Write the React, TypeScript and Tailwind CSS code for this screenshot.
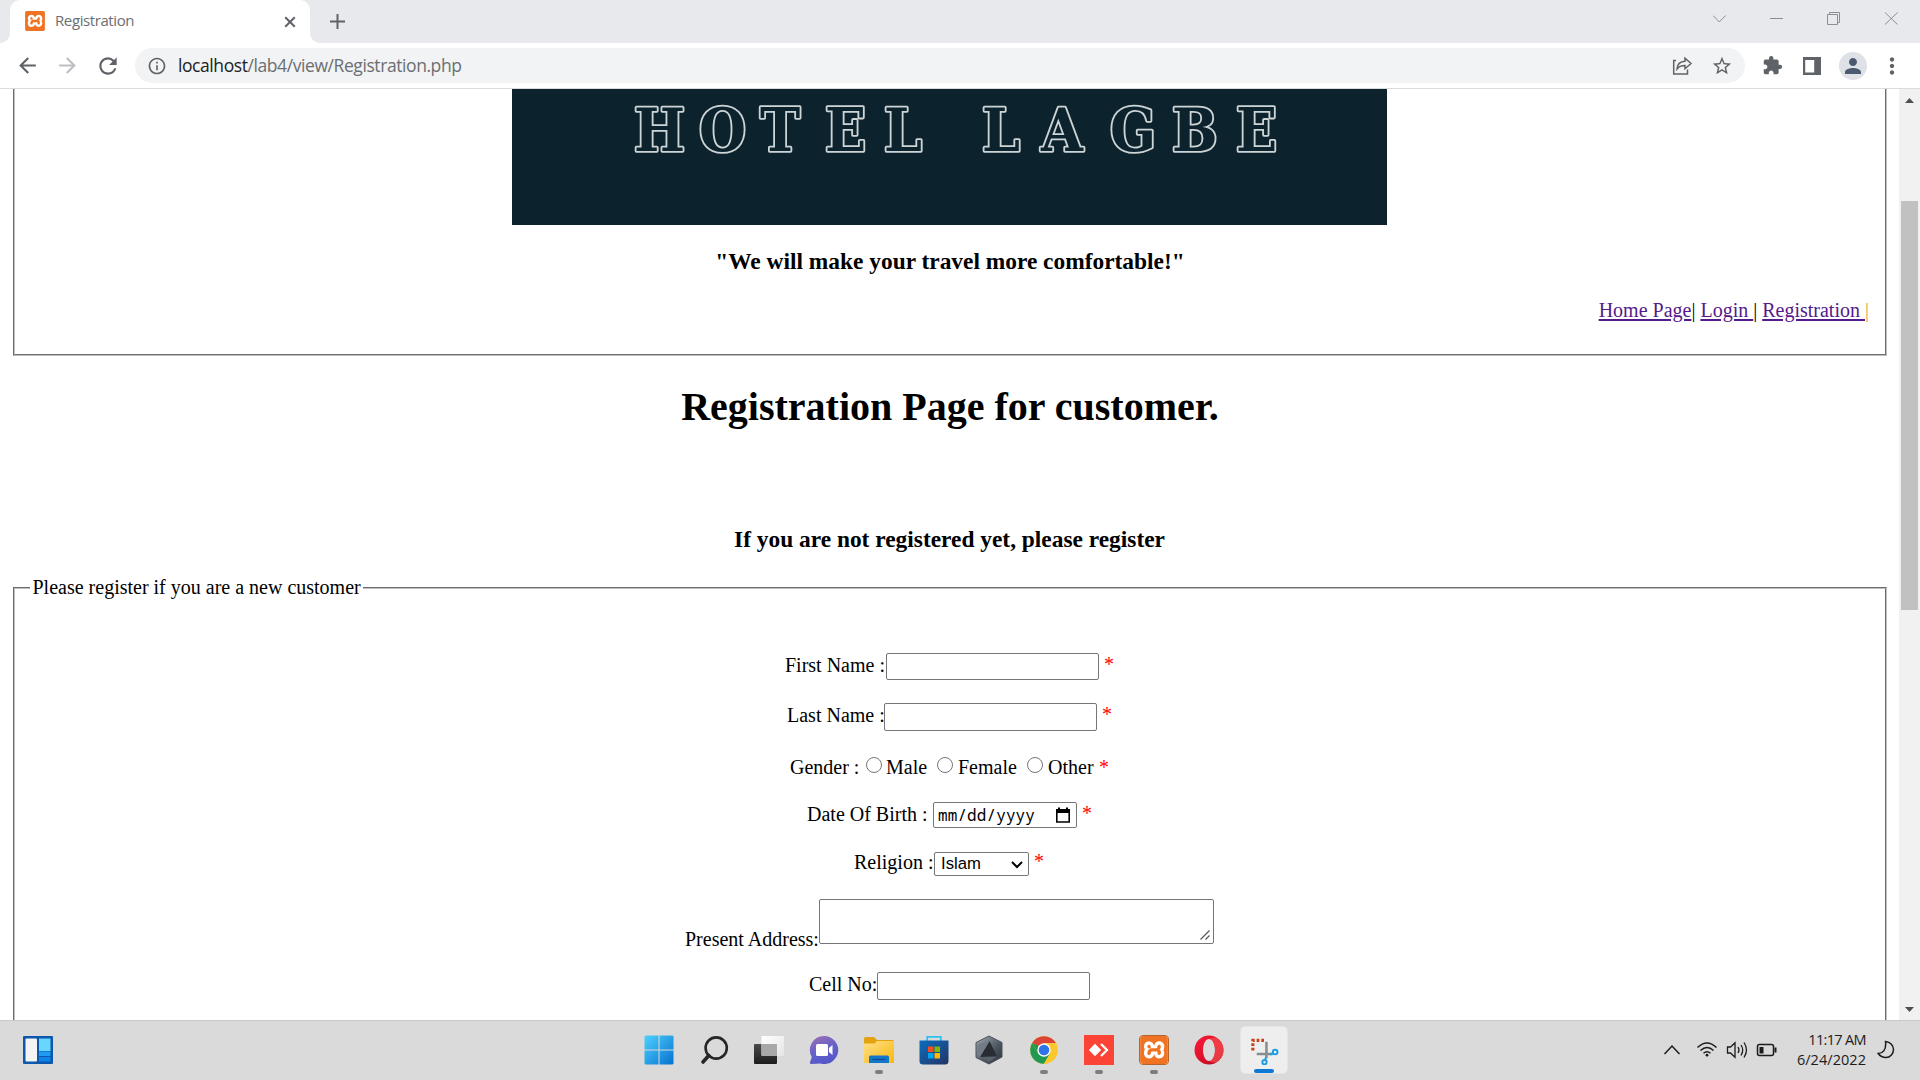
import type { ReactNode } from "react";
import {
  MdArrowBack,
  MdArrowForward,
  MdRefresh,
  MdInfoOutline,
  MdStarBorder,
  MdExtension,
  MdPerson,
  MdMoreVert,
} from "react-icons/md";
import { SiXampp } from "react-icons/si";

const UI = "font-['Open_Sans','Noto_Sans',sans-serif]";

function TabStrip() {
  return (
    <div className="flex h-[43px] shrink-0 bg-[#e8e9ed]">
      <div className="flex w-[10px] items-end bg-white">
        <div className="h-full w-full rounded-br-[10px] bg-[#e8e9ed]" />
      </div>
      <div className="flex w-[300px] bg-white">
        <div className="flex h-full w-full bg-[#e8e9ed]">
          <div className="flex w-full items-center rounded-t-[10px] bg-white pl-[15px]">
            <div className="relative -top-px h-5 w-5 rounded-[2px] bg-white text-[#f07323]">
              <SiXampp size={20} />
            </div>
            <span className={`ml-[10px] mt-[-4px] w-[200px] whitespace-nowrap text-[15px] leading-5 tracking-[-0.4px] text-[#6b6e72] ${UI}`}>
              Registration
            </span>
            <svg className="ml-[29px]" width="12" height="12" viewBox="0 0 12 12" stroke="#5f6368" strokeWidth="2" fill="none">
              <path d="M1.200 1.200l9.600 9.600M10.800 1.200L1.200 10.800" />
            </svg>
          </div>
        </div>
      </div>
      <div className="flex flex-1 bg-white">
        <div className="flex flex-1 justify-between rounded-bl-[10px] bg-[#e8e9ed]">
          <svg className="ml-5 mt-[14px]" width="15" height="15" viewBox="0 0 15 15" stroke="#5f6368" strokeWidth="2" fill="none">
            <path d="M7.500 0v15M0 7.500h15" />
          </svg>
          <svg width="207" height="43" viewBox="1713 0 207 43" stroke="#8d8e91" strokeWidth="1" fill="none">
            <path d="M1713 15.500l6.300 6.500l6.300-6.500M1770 18.500h13M1827.500 14.500h10v10h-10zM1829.500 14.500v-2h10v10h-2M1885 12.500l12.500 12M1897.500 12.500l-12.500 12" />
          </svg>
        </div>
      </div>
    </div>
  );
}

function Toolbar() {
  return (
    <div className="flex h-[46px] shrink-0 items-start border-b border-[#dadbdd] bg-white pt-[5px]">
      <div className="flex h-[35px] w-[135px] items-center pl-[15px] text-[#5f6368]">
        <MdArrowBack size={25} />
        <MdArrowForward size={25} className="ml-[15px] text-[#bcbec1]" />
        <MdRefresh size={26} className="ml-[15px]" />
      </div>
      <div className="flex h-[35px] w-[1610px] items-center rounded-full bg-[#f1f3f4] pl-[12px]">
        <MdInfoOutline size={20} className="text-[#5f6368]" />
        <span className={`ml-[11px] mt-[-1px] w-[1494px] whitespace-nowrap text-[17.500px] leading-6 tracking-[-0.420px] text-[#6b6e72] ${UI}`}>
          <span className="text-[#202124]">localhost</span>/lab4/view/Registration.php
        </span>
        <svg className="mt-[1px]" width="21" height="20" viewBox="0 0 21 20" stroke="#5f6368" strokeWidth="1.500" fill="none">
          <path d="M4 4.500H1.700v13.500H15.500v-4.500" />
          <path d="M5 13c.3-5 3.500-7.500 8-7.700V2.200L19 7.500l-6 5.200V9.600C9 9.600 7 10.500 5 13z" />
        </svg>
        <MdStarBorder size={22} className="ml-[18px] text-[#5f6368]" />
      </div>
      <div className="flex h-[35px] flex-1 items-center text-[#5f6368]">
        <MdExtension size={21} className="ml-[17px]" />
        <svg className="ml-[20px]" width="18" height="18" viewBox="0 0 18 18">
          <path d="M0 0h18v18H0z" fill="#5f6368" />
          <path d="M2.200 3h9v12.500h-9z" fill="#fff" />
        </svg>
        <div className="ml-[18px] flex h-7 w-7 items-center justify-center rounded-full bg-[#dee1e6] text-[#4c5a70]">
          <MdPerson size={24} />
        </div>
        <MdMoreVert size={26} className="ml-[12px] mt-px" />
      </div>
    </div>
  );
}

function Banner() {
  return (
    <svg className="ml-[497px] block bg-[#0c222d]" width="875" height="136" viewBox="512 89 875 136">
      <text
        x="634 699 760 825 884 940 982 1041 1110 1172 1236"
        y="150.500"
        className="font-['DejaVu_Serif_Condensed','DejaVu_Serif',serif] font-bold [paint-order:stroke]"
        fontSize="60"
        fill="#0c222d"
        stroke="#ccd4d5"
        strokeWidth="3.600"
        strokeLinejoin="round"
      >
        HOTEL LAGBE
      </text>
    </svg>
  );
}

function Star({ className }: { className: string }) {
  return <span className={`text-[red] ${className}`}>*</span>;
}

function TextBox({ className }: { className: string }) {
  return <div className={`box-border w-[213px] rounded-[2px] border border-[#767676] bg-white ${className}`} />;
}

function Radio() {
  return <div className="mt-px h-4 w-4 rounded-full border border-[#767676] bg-white" />;
}

function RegistrationForm() {
  return (
    <fieldset className="ml-[13px] mr-[12px] mt-[23px] h-[460px] [border:2px_groove_#c0c0c0] text-black">
      <legend className="ml-[15px] h-[23px] px-[2.500px] leading-[23px]">Please register if you are a new customer</legend>
      <div className="flex flex-col whitespace-nowrap leading-[23px]">
        <div className="mt-[54px] flex h-[50px] items-start pl-[770px]">
          <span className="mt-px w-[101px]">First Name :</span>
          <TextBox className="h-[27px]" />
          <Star className="ml-[5px]" />
        </div>
        <div className="flex h-[53px] items-start pl-[772px]">
          <span className="mt-px w-[97px]">Last Name :</span>
          <TextBox className="h-[28px]" />
          <Star className="ml-[5px]" />
        </div>
        <div className="flex h-[46px] items-start pl-[775px]">
          <span className="w-[76px]">Gender :</span>
          <Radio />
          <span className="ml-[4px] w-[51px]">Male</span>
          <Radio />
          <span className="ml-[5px] w-[69px]">Female</span>
          <Radio />
          <span className="ml-[5px] w-[51px]">Other</span>
          <Star className="" />
        </div>
        <div className="flex h-[50px] items-start pl-[792px]">
          <span className="mt-px w-[126px]">Date Of Birth :</span>
          <div className="flex h-[26px] w-[144px] items-center justify-between rounded-[2px] border border-[#767676] pl-[4px] pr-[6px]">
            <span className="font-['Noto_Sans_Mono','DejaVu_Sans_Mono',monospace] text-[16px] leading-5 tracking-[0.1px]">mm/dd/yyyy</span>
            <svg width="14" height="16" viewBox="0 0 14 16">
              <path d="M.8 3h12.400v12H.8z" fill="none" stroke="#000" strokeWidth="1.600" />
              <path d="M0 2h14v4H0zM2 .5h2v2H2zM10 .5h2v2h-2z" />
            </svg>
          </div>
          <Star className="ml-[5px]" />
        </div>
        <div className="flex h-[47px] items-start pl-[839px]">
          <span className="-mt-px w-[80px]">Religion :</span>
          <div className="flex h-[24px] w-[95px] items-center justify-between rounded-[2px] border border-[#767676] pl-[6px] pr-[5px]">
            <span className="font-['Liberation_Sans',sans-serif] text-[16.670px] leading-5">Islam</span>
            <svg className="mt-px" width="12" height="8" viewBox="0 0 12 8" fill="none" stroke="#000" strokeWidth="2">
              <path d="M1 1l5 5 5-5" />
            </svg>
          </div>
          <Star className="-mt-[2px] ml-[5px]" />
        </div>
        <div className="flex h-[73px] items-start pl-[670px]">
          <span className="mt-[29px] w-[134px]">Present Address:</span>
          <div className="flex h-[45px] w-[395px] items-end justify-end rounded-[2px] border border-[#767676] p-[3px]">
            <svg width="10" height="10" viewBox="0 0 10 10" stroke="#555" strokeWidth="1.200">
              <path d="M.5 9.500l9-9M5.500 9.500l4-4" />
            </svg>
          </div>
        </div>
        <div className="flex items-start pl-[794px]">
          <span className="mt-px w-[68px]">Cell No:</span>
          <TextBox className="h-[28px]" />
        </div>
      </div>
    </fieldset>
  );
}

function PageView() {
  return (
    <div className="flex h-[931px] shrink-0 overflow-hidden bg-white">
      <div className="h-full w-[1899px] overflow-hidden font-['Liberation_Serif',serif] text-[20px] leading-[23px] text-black">
        <div className="ml-[13px] mr-[12px] h-[267px] border-2 border-t-0 border-[#c0c0c0] [border-style:groove]">
          <Banner />
          <h3 className="mt-[23px] text-center text-[23.400px] font-bold leading-[27px]">"We will make your travel more comfortable!"</h3>
          <div className="mr-[16px] mt-[24px] flex justify-end whitespace-pre text-black">
            <span className="text-[#551a8b] underline decoration-2 underline-offset-2">Home Page</span>
            <span>| </span>
            <span className="text-[#551a8b] underline decoration-2 underline-offset-2">Login </span>
            <span>| </span>
            <span className="text-[#551a8b] underline decoration-2 underline-offset-2">Registration </span>
            <span className="text-[#e0a050]">|</span>
          </div>
        </div>
        <h1 className="mr-[-1px] mt-[28px] text-center text-[40px] font-bold leading-[46px]">Registration Page for customer.</h1>
        <h3 className="mt-[96px] text-center text-[23.400px] font-bold leading-[27px]">If you are not registered yet, please register</h3>
        <RegistrationForm />
      </div>
      <div className="flex w-[21px] flex-col items-center justify-between bg-[#f1f1f1] pb-[8px] pt-[9px]">
        <svg width="9" height="5" viewBox="0 0 9 5" fill="#505050">
          <path d="M0 5L4.500 0 9 5z" />
        </svg>
        <div className="mb-[397px] mt-[98px] w-[17px] flex-1 bg-[#c1c1c1]" />
        <svg width="9" height="5" viewBox="0 0 9 5" fill="#505050">
          <path d="M0 0l4.500 5L9 0z" />
        </svg>
      </div>
    </div>
  );
}

function Slot({ children, running }: { children: ReactNode; running?: boolean }) {
  return (
    <div className="flex h-[60px] w-[55px] flex-col items-center pt-[15px]">
      {children}
      {running && <div className="mt-[5px] h-[4px] w-[8px] rounded-full bg-[#7d7d7d]" />}
    </div>
  );
}

function TaskIcons() {
  return (
    <div className="flex">
      <Slot>
        <svg width="30" height="30" viewBox="0 0 30 30">
          <defs>
            <linearGradient id="win" x1="0" y1="0" x2="1" y2="1" gradientUnits="objectBoundingBox">
              <stop offset="0" stopColor="#4fd0fd" />
              <stop offset="1" stopColor="#0571d0" />
            </linearGradient>
          </defs>
          <path d="M1.500.5H14.500V14.500H.5V1.500zM15.500.5H28.500l1 1V14.500h-14zM.5 15.500h14v14h-13l-1-1zM15.500 15.500h14v13l-1 1h-13z" fill="url(#win)" />
        </svg>
      </Slot>
      <Slot>
        <svg width="30" height="30" viewBox="0 0 30 30" fill="none" stroke="#262626">
          <circle cx="17.200" cy="13" r="10.600" strokeWidth="2.600" />
          <path d="M9.800 20.500L4 27" strokeWidth="3.600" strokeLinecap="round" />
        </svg>
      </Slot>
      <Slot>
        <svg width="30" height="30" viewBox="0 0 30 30">
          <defs>
            <linearGradient id="tv1" x1="0" y1="0" x2="0" y2="1">
              <stop offset="0" stopColor="#4a4a4a" />
              <stop offset="1" stopColor="#1c1c1c" />
            </linearGradient>
            <linearGradient id="tv2" x1="0" y1="0" x2="1" y2="1">
              <stop offset="0" stopColor="#fff" />
              <stop offset="1" stopColor="#e4e4e4" />
            </linearGradient>
          </defs>
          <rect x="0" y="9" width="23" height="20" rx="1" fill="url(#tv1)" />
          <rect x="7.500" y="1" width="22.500" height="20" rx="1" fill="url(#tv2)" />
          <path d="M7.500 9H23v12H8.500l-1-1z" fill="#a8a8a8" />
        </svg>
      </Slot>
      <Slot>
        <svg width="30" height="30" viewBox="0 0 30 30">
          <defs>
            <linearGradient id="chat" x1="0.100" y1="0" x2="0.500" y2="1">
              <stop offset="0" stopColor="#9a6fb0" />
              <stop offset="0.500" stopColor="#6a62c8" />
              <stop offset="1" stopColor="#5257c9" />
            </linearGradient>
          </defs>
          <path d="M15 1a14 14 0 1 1-3.500 27.500L2 29c-1 0-1.500-1-1-1.800l1.800-5.200A14 14 0 0 1 15 1z" fill="url(#chat)" />
          <rect x="7" y="9" width="12" height="12" rx="1.500" fill="#fff" />
          <path d="M20 13l3.500-3v10L20 17z" fill="#fff" />
        </svg>
      </Slot>
      <Slot running>
        <svg width="30" height="30" viewBox="0 0 30 30">
          <defs>
            <linearGradient id="fold" x1="0" y1="0" x2="1" y2="1">
              <stop offset="0" stopColor="#ffe08a" />
              <stop offset="1" stopColor="#f8b90c" />
            </linearGradient>
          </defs>
          <path d="M0 3.500Q0 2 1.500 2H10l3 3h15.500Q30 5 30 6.500V10H0z" fill="#e2a30f" />
          <path d="M0 8.500h10.500L13 6h17v22H0z" fill="url(#fold)" />
          <path d="M5 28v-6q0-1.500 1.500-1.500h17Q25 20.500 25 22v6z" fill="#1377c9" />
          <path d="M8.500 24.500h13" stroke="#0b4b93" strokeWidth="1.200" />
        </svg>
      </Slot>
      <Slot>
        <svg width="30" height="30" viewBox="0 0 30 30">
          <defs>
            <linearGradient id="store" x1="0" y1="0" x2="1" y2="1">
              <stop offset="0" stopColor="#0d6dc0" />
              <stop offset="1" stopColor="#223463" />
            </linearGradient>
          </defs>
          <path d="M8.200 7V1.800h13.600V7" fill="none" stroke="#2fc1f0" strokeWidth="1.800" />
          <path d="M.5 5.500h29V26q0 3.500-3.500 3.500H4Q.5 29.500.5 26z" fill="url(#store)" />
          <path d="M9 11.500h5.500V17H9z" fill="#f25022" />
          <path d="M15.500 11.500H21V17h-5.500z" fill="#7fba00" />
          <path d="M9 18h5.500v5.500H9z" fill="#00a4ef" />
          <path d="M15.500 18H21v5.500h-5.500z" fill="#ffb900" />
        </svg>
      </Slot>
      <Slot>
        <svg width="30" height="30" viewBox="0 0 30 30">
          <defs>
            <linearGradient id="hex" x1="0" y1="0" x2="1" y2="1">
              <stop offset="0" stopColor="#a4acb5" />
              <stop offset="0.600" stopColor="#4b545e" />
              <stop offset="1" stopColor="#2a3138" />
            </linearGradient>
          </defs>
          <path d="M15 1L28 7.500v14.500L15 29 2 22.500v-15z" fill="url(#hex)" stroke="#4a5159" />
          <path d="M15.500 6L23 21.500 6 22z" fill="#272d33" />
          <path d="M15.500 6L6 22l-3-2 1-11z" fill="#737c86" />
          <path d="M23 21.500L15 27 6 22z" fill="#59626c" />
        </svg>
      </Slot>
      <Slot running>
        <svg width="30" height="30" viewBox="0 0 30 30">
          <circle cx="15" cy="15" r="13.800" fill="#fcc62e" />
          <path d="M15 15L3.050 8.100A13.800 13.800 0 0 1 26.950 8.100H15z" fill="#dd4437" />
          <path d="M3.050 8.100A13.800 13.800 0 0 0 15 28.800L21 18.500 15 15 9.500 19z" fill="#1f9a50" />
          <path d="M3.050 8.100L9.300 18.500 12 12z" fill="#1f9a50" />
          <path d="M15 8.100H26.950A13.800 13.800 0 0 1 15 28.800L21 18.500z" fill="#fcc62e" />
          <circle cx="15" cy="15" r="6.700" fill="#fff" />
          <circle cx="15" cy="15" r="5.300" fill="#2f74e6" />
        </svg>
      </Slot>
      <Slot running>
        <svg width="30" height="30" viewBox="0 0 30 30">
          <path d="M0 0h30v30H0z" fill="#fb4336" />
          <path d="M11 8.800L17.200 15 11 21.200 4.800 15z" fill="#fff" />
          <path d="M17 9l6 6-6 6" fill="none" stroke="#fff" strokeWidth="2.200" />
        </svg>
      </Slot>
      <Slot running>
        <div className="h-[30px] w-[30px] rounded-[4px] border border-[#b5652b] bg-white text-[#f07323]">
          <SiXampp size={28} />
        </div>
      </Slot>
      <Slot>
        <svg width="30" height="30" viewBox="0 0 30 30">
          <defs>
            <linearGradient id="op" x1="0" y1="0" x2="1" y2="1">
              <stop offset="0" stopColor="#ff1b3a" />
              <stop offset="0.600" stopColor="#d80f28" />
              <stop offset="1" stopColor="#a8091c" />
            </linearGradient>
          </defs>
          <path d="M15 .5a14.500 14.500 0 1 1 0 29 14.500 14.500 0 0 1 0-29zM15 4c-3.300 0-6 4.900-6 11s2.700 11 6 11 6-4.900 6-11-2.700-11-6-11z" fill="url(#op)" fillRule="evenodd" />
          <path d="M15 4q3-2 7-1.500Q29.500 7 29.500 15T22 27.500Q18 28 15 26c3.300 0 6-4.900 6-11S18.300 4 15 4z" fill="#f5494d" opacity=".75" />
        </svg>
      </Slot>
      <div className="ml-[4px] mt-[6px] flex h-[48px] w-[48px] flex-col items-center rounded-[5px] border border-[#e4e4e4] bg-[#eeeeee] pt-[10px]">
        <svg width="30" height="29" viewBox="0 0 30 29" fill="none">
          <path d="M15 3.500H3.500V16" stroke="#c8421b" strokeWidth="3.200" strokeDasharray="2.800 2" />
          <path d="M17.500 5v17M7.500 17.500H24" stroke="#878c91" strokeWidth="2.600" />
          <circle cx="26.500" cy="15.500" r="2.400" stroke="#1b9de2" strokeWidth="2" />
          <circle cx="15.500" cy="26" r="2.200" stroke="#1b9de2" strokeWidth="2" />
          <path d="M21 18l3-1M17 21l-.8 3" stroke="#1b9de2" strokeWidth="2" />
        </svg>
        <div className="mt-[4px] h-[4px] w-5 rounded-full bg-[#0f78d4]" />
      </div>
    </div>
  );
}

function Tray() {
  return (
    <div className="flex text-[#1c1c1c]">
      <svg width="120" height="60" viewBox="1660 1020 120 60" fill="none" stroke="#1c1c1c" strokeWidth="1.500">
        <path d="M1664.500 1054l7.500-8 7.500 8" />
        <path d="M1697.500 1047.500q9.500-9 19 0M1700.500 1050.500q6.500-6 13 0M1703.500 1053.300q3.500-3 7 0" />
        <circle cx="1707" cy="1055.200" r="1.400" fill="#1c1c1c" stroke="none" />
        <path d="M1727.500 1047h3l4.500-4.200v14.400l-4.500-4.200h-3zM1738 1047q2 3 0 6M1741 1045q3.500 5 0 10.500M1744 1042.500q5 7.500 0 15" strokeWidth="1.300" />
        <rect x="1757.500" y="1044.500" width="16" height="11" rx="2" />
        <path d="M1759.500 1047h4v6.500h-4zM1774.500 1047.500h2v5h-2z" fill="#1c1c1c" stroke="none" />
      </svg>
      <div className={`mt-[10px] flex w-[86px] flex-col items-end whitespace-nowrap text-[14.500px] leading-5 ${UI}`}>
        <span className="tracking-[-0.650px]">11:17 AM</span>
        <span className="tracking-[0.050px]">6/24/2022</span>
      </div>
      <svg className="ml-[11px] mt-[20px]" width="18" height="20" viewBox="0 0 18 20" fill="none" stroke="#1c1c1c" strokeWidth="1.500">
        <path d="M8.500 1.500C13.500 2 16.500 5.500 16.500 9.500c0 4.500-3.500 8-7.500 8-3.500 0-6-1.500-7.800-4 4 0 8.500-3 7.300-12z" />
      </svg>
    </div>
  );
}

function Taskbar() {
  return (
    <div className="flex h-[60px] shrink-0 items-start bg-[#dadada] shadow-[inset_0_1px_0_#c9c9c9]">
      <div className="w-[631px] pl-[23px] pt-[16px]">
        <svg width="30" height="28" viewBox="0 0 30 28">
          <rect width="30" height="28" rx="1" fill="#0d58ac" />
          <rect x="2.500" y="2.500" width="11.500" height="23" rx="1" fill="#f4f4f4" />
          <path d="M16 2.500h11.500V15H16z" fill="#69d6fd" />
          <path d="M16 15.500h11.500V20H16z" fill="#1e9cf0" />
          <path d="M16 21h11.500v4.500H16z" fill="#0e83ea" />
        </svg>
      </div>
      <TaskIcons />
      <div className="flex-1" />
      <div className="w-[260px]">
        <Tray />
      </div>
    </div>
  );
}

export default function App() {
  return (
    <div className="flex h-[1080px] w-[1920px] flex-col overflow-hidden bg-white">
      <TabStrip />
      <Toolbar />
      <PageView />
      <Taskbar />
    </div>
  );
}
